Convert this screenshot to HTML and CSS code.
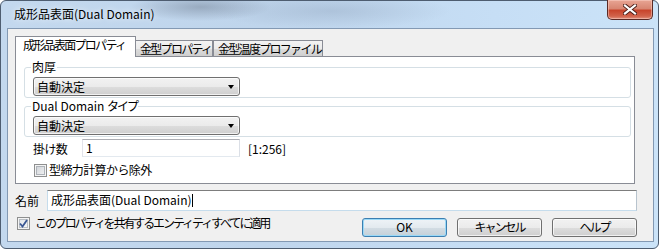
FILE: index.html
```html
<!DOCTYPE html>
<html lang="ja">
<head>
    <meta charset="UTF-8">
    <title>成形品表面(Dual Domain)</title>
    <link rel="stylesheet" href="styles.css">
</head>
<body>
    <div class="window">
        <div class="titlebar">
            <span class="title">成形品表面(Dual Domain)</span>
            <div class="close-btn">
                <svg width="14" height="11" viewBox="0 0 14 11">
                    <path d="M2 1.5 L12 9.5 M12 1.5 L2 9.5" stroke="#4a1e18" stroke-width="4" stroke-linecap="square"/>
                    <path d="M2 1.5 L12 9.5 M12 1.5 L2 9.5" stroke="#fff" stroke-width="2.2" stroke-linecap="square"/>
                </svg>
            </div>
        </div>
        <div class="client">
            <div class="tabs">
                <div class="tab active">成形品表面プロパティ</div>
                <div class="tab tab-mold">金型プロパティ</div>
                <div class="tab tab-temp">金型温度プロファイル</div>
            </div>
            <div class="tab-panel">
                <fieldset class="group">
                    <legend>肉厚</legend>
                    <div class="combo"><span>自動決定</span><span class="arrow"></span></div>
                </fieldset>
                <fieldset class="group">
                    <legend>Dual Domain <span class="kana-tight">タイプ</span></legend>
                    <div class="combo"><span>自動決定</span><span class="arrow"></span></div>
                </fieldset>
                <div class="field-row">
                    <span class="field-label">掛け数</span>
                    <div class="textbox count-box">1</div>
                    <span class="range">[1:256]</span>
                </div>
                <div class="check-row panel-check">
                    <span class="checkbox"></span>
                    <span class="check-text">型締力計算から除外</span>
                </div>
            </div>
            <div class="name-row">
                <span class="name-label">名前</span>
                <div class="textbox name-box">成形品表面(Dual Domain)<span class="caret"></span></div>
            </div>
            <div class="bottom-row">
                <div class="check-row apply-check">
                    <span class="checkbox checked">
                        <svg width="11" height="11" viewBox="0 0 11 11">
                            <path d="M2 5.5 L4.5 8.5 L9 2" fill="none" stroke="#3b5894" stroke-width="1.8"/>
                        </svg>
                    </span>
                    <span class="apply-text">このプロパティを共有するエンティティすべてに適用</span>
                </div>
                <div class="buttons">
                    <div class="btn default">OK</div>
                    <div class="btn kana">キャンセル</div>
                    <div class="btn kana">ヘルプ</div>
                </div>
            </div>
        </div>
    </div>
</body>
</html>
```

FILE: styles.css
```css
body {
    margin: 0;
    padding: 0;
    background-color: #fff;
    font-family: "Noto Sans CJK JP", sans-serif;
    font-size: 12px;
    color: #000;
    overflow: hidden;
}
.window {
    width: 659px;
    height: 249px;
    box-sizing: border-box;
    border: 1px solid #4e5d70;
    border-radius: 6px 6px 6px 6px;
    padding: 0 4px 7px 6px;
    background-color: #c2d8ef;
    background-image:
        radial-gradient(ellipse 70px 14px at 200px 6px, rgba(120,135,155,0.55), rgba(120,135,155,0) 100%),
        radial-gradient(ellipse 120px 18px at 330px 10px, rgba(150,170,195,0.45), rgba(150,170,195,0) 100%),
        linear-gradient(to right, #c3d8ee 0%, #bfd5ec 40%, #c6def5 75%, #cbe3f8 100%);
}
.titlebar {
    display: flex;
    align-items: flex-start;
    height: 27px;
}
.title {
    margin-top: 5px;
    margin-left: 7px;
    line-height: 16px;
    text-shadow: 0 0 6px rgba(255,255,255,0.9);
}
.close-btn {
    margin-left: auto;
    margin-top: -1px;
    margin-right: 1px;
    width: 46px;
    height: 20px;
    box-sizing: border-box;
    border: 1px solid #5a2a25;
    border-top: none;
    border-radius: 0 0 5px 5px;
    background: linear-gradient(#e8a594 0%, #d88672 45%, #c8452c 55%, #d1634b 85%, #e2917d 100%);
    display: flex;
    align-items: center;
    justify-content: center;
    box-shadow: inset 0 0 0 1px rgba(255,220,210,0.45);
}
.client {
    width: 647px;
    height: 214px;
    box-sizing: border-box;
    border: 1px solid #8399b3;
    background-color: #f0f0f0;
    padding: 7px 16px 0 7px;
}
.tabs {
    display: flex;
    align-items: flex-end;
    height: 20px;
}
.tab {
    box-sizing: border-box;
    height: 16px;
    border: 1px solid #898c95;
    border-bottom: none;
    background: linear-gradient(#f3f3f3 0%, #ebebeb 50%, #dddddd 51%, #cfcfcf 100%);
    line-height: 14px;
    padding: 1px 0 0 4px;
    white-space: nowrap;
    letter-spacing: -1.7px;
}
.tab.active {
    position: relative;
    z-index: 1;
    width: 121px;
    height: 21px;
    margin-bottom: -1px;
    background: #fff;
    padding: 1px 0 0 7px;
}
.tab-mold {
    width: 78px;
    margin-left: -1px;
}
.tab-temp {
    width: 110px;
    margin-left: 0;
}
.tab-panel {
    width: 620px;
    height: 128px;
    box-sizing: border-box;
    border: 1px solid #898c95;
    background-color: #fff;
    padding: 3px 3px 0 8px;
}
.group {
    margin: 0;
    border: 1px solid #d5dfe5;
    border-radius: 3px;
    padding: 3px 8px 1px 8px;
}
.group + .group {
    margin-top: 1px;
}
.group legend {
    padding: 0 1px;
    margin-left: -2px;
    line-height: 14px;
}
.kana-tight {
    letter-spacing: -2px;
}
.combo {
    display: flex;
    align-items: center;
    justify-content: space-between;
    width: 207px;
    height: 19px;
    box-sizing: border-box;
    border: 1px solid #707070;
    border-radius: 3px;
    padding: 0 5px 0 3px;
    background: linear-gradient(#f2f2f2 0%, #ebebeb 50%, #dddddd 51%, #cfcfcf 100%);
    box-shadow: inset 0 0 0 1px rgba(255,255,255,0.7);
    line-height: 14px;
}
.arrow {
    width: 0;
    height: 0;
    border-left: 3.5px solid transparent;
    border-right: 3.5px solid transparent;
    border-top: 4px solid #000;
}
.textbox {
    box-sizing: border-box;
    border: 1px solid;
    border-color: #abadb3 #dbdfe6 #e3e9ef #e2e3ea;
    background-color: #fff;
    line-height: 14px;
    white-space: nowrap;
}
.field-row {
    display: flex;
    align-items: center;
    margin-top: 2px;
    height: 18px;
    padding-left: 9px;
}
.field-label {
    width: 49px;
    letter-spacing: -0.6px;
}
.count-box {
    width: 158px;
    height: 18px;
    padding: 1px 0 0 3px;
}
.range {
    margin-left: 8px;
}
.check-row {
    display: flex;
    align-items: center;
    line-height: 14px;
    white-space: nowrap;
}
.panel-check {
    margin-top: 6px;
    padding-left: 10px;
    gap: 2px;
}
.check-text {
    letter-spacing: -0.6px;
}
.checkbox {
    width: 13px;
    height: 13px;
    box-sizing: border-box;
    border: 1px solid #8e8f8f;
    background: linear-gradient(135deg, #cbcfd5 0%, #f6f6f6 100%);
    box-shadow: inset 0 0 0 1px #f4f4f4, inset 0 0 0 2px #aeb3b9;
    display: flex;
    align-items: center;
    justify-content: center;
    flex-shrink: 0;
}
.checkbox.checked {
    background: linear-gradient(135deg, #dfe3e8 0%, #fafafa 100%);
    box-shadow: inset 0 0 0 1px #f4f4f4, inset 0 0 0 2px #b9bec4;
}
.name-row {
    display: flex;
    align-items: center;
    margin-top: 6px;
    height: 21px;
}
.name-label {
    width: 32px;
}
.name-box {
    flex: 1;
    height: 21px;
    padding: 2px 0 0 3px;
    border-color: #7d7d7d #b8c4ce #c5dcec #c5dcec;
}
.caret {
    display: inline-block;
    width: 1px;
    height: 13px;
    background-color: #000;
    vertical-align: -2px;
}
.bottom-row {
    display: flex;
    align-items: flex-start;
    margin-top: 5px;
}
.apply-check {
    padding-left: 2px;
    gap: 5px;
}
.apply-text {
    letter-spacing: -2.1px;
}
.buttons {
    display: flex;
    gap: 10px;
    margin-left: auto;
    margin-top: 2px;
}
.btn {
    width: 85px;
    height: 19px;
    box-sizing: border-box;
    border: 1px solid #707070;
    border-radius: 3px;
    background: linear-gradient(#f2f2f2 0%, #ebebeb 50%, #dddddd 51%, #cfcfcf 100%);
    box-shadow: inset 0 0 0 1px rgba(255,255,255,0.7);
    text-align: center;
    line-height: 16px;
}
.btn.kana {
    letter-spacing: -2px;
}
.btn.default {
    border-color: #3c7fb1;
    background: linear-gradient(#eef3f7 0%, #e3eaef 50%, #d3dde4 51%, #c4d0d8 100%);
    box-shadow: inset 0 0 0 1px #9ad9f7;
}
```
